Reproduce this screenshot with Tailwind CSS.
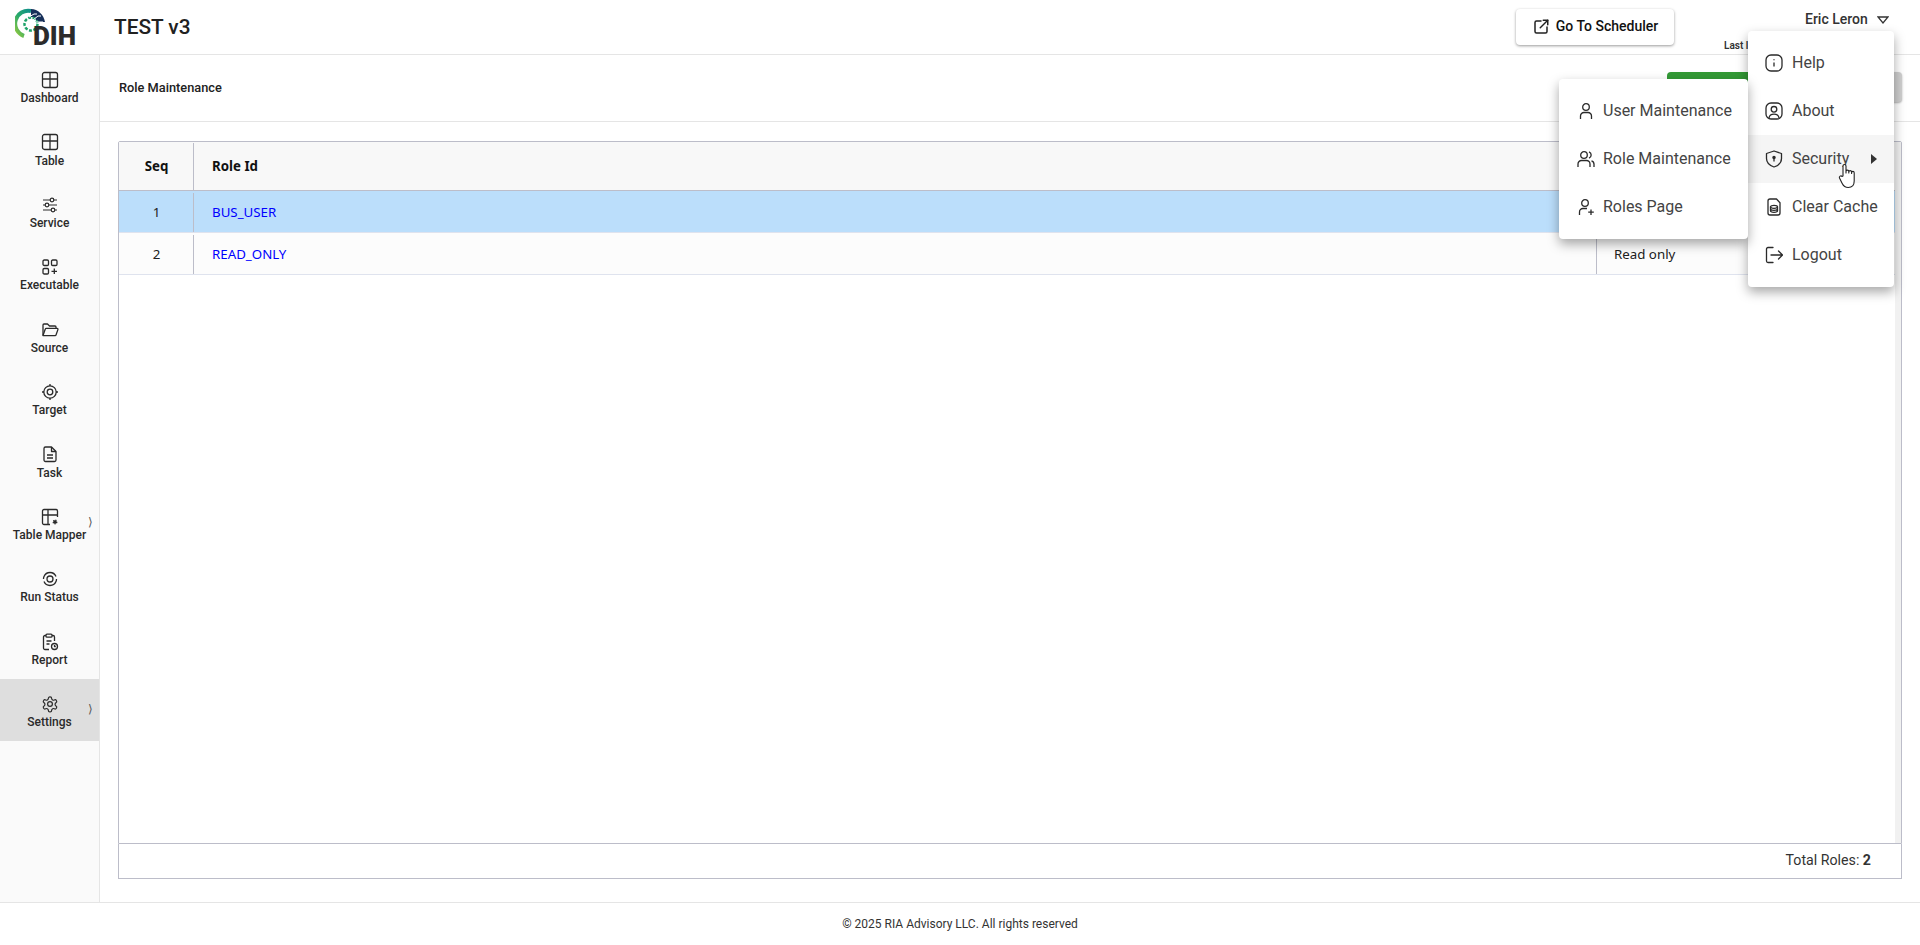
<!doctype html>
<html lang="en">
  <head>
    <meta charset="UTF-8" />
    <title>Role Maintenance</title>
    <script src="https://cdn.jsdelivr.net/npm/@tailwindcss/browser@4"></script>
  </head>
  <body class="h-[945px] overflow-hidden bg-white font-['Roboto',sans-serif] text-[#212121]">
    <div class="relative flex h-full flex-col">
      <!-- top bar -->
      <header class="flex h-[55px] shrink-0 items-center border-b border-[#e5e5e5] pl-[15px]">
        <svg class="h-[46px] w-[66px] shrink-0" viewBox="0 0 66 46" fill="none">
          <defs>
            <linearGradient id="ring" x1="0" y1="1" x2="1" y2="0">
              <stop offset="0" stop-color="#9ccb3b" />
              <stop offset="0.5" stop-color="#27a96c" />
              <stop offset="1" stop-color="#0f8f8a" />
            </linearGradient>
          </defs>
          <g transform="translate(1 3)">
            <path d="M8 29A13 13 0 0 1 15 4" stroke="url(#ring)" stroke-width="4" />
            <path d="M15 2c7 0 13 6 14 13h-8c-1-3-3-5-6-5z" fill="#17305a" />
            <circle cx="15" cy="17" r="6.500" stroke="#1fa36a" stroke-width="2.500" stroke-dasharray="3 1.500" />
            <path d="M13 10l5-3h3M17 13l5-4h3M20 15h7" stroke="#fff" stroke-width="1" />
            <circle cx="15" cy="17" r="4" fill="#fff" />
          </g>
          <text x="18" y="41" font-family="Roboto, sans-serif" font-weight="900" font-size="25" textLength="43" lengthAdjust="spacingAndGlyphs" fill="#2b2b2b">DIH</text>
        </svg>
        <div class="ml-[33px] mt-[1px] text-[20.8px] font-medium text-[#212121]">TEST v3</div>
        <button class="ml-auto flex h-[36px] w-[158px] items-center justify-center gap-[6px] rounded-[4px] bg-white pb-[1px] text-[14px] font-medium text-[#111] shadow-[0_1px_3px_rgba(0,0,0,0.4)]">
          <svg class="size-[18px]" viewBox="0 0 24 24" fill="none" stroke="#222" stroke-width="2" stroke-linecap="round" stroke-linejoin="round"><path d="M12 4H6a2 2 0 0 0-2 2v12a2 2 0 0 0 2 2h12a2 2 0 0 0 2-2v-6" /><path d="M11 13 21 3" /><path d="M15 3h6v6" /></svg>
          Go To Scheduler
        </button>
        <div class="ml-[50px] flex h-full w-[196px] flex-col">
          <div class="mt-[9px] flex items-center pl-[81px] text-[14px] font-medium text-[#333]">
            Eric Leron
            <svg class="ml-[9px] mt-[1px] h-[8px] w-[12px]" viewBox="0 0 12 8" fill="none" stroke="#333" stroke-width="1.300"><path d="M1 1h10L6 7z" /></svg>
          </div>
          <div class="mt-[8px] text-[10px] font-semibold text-[#333]">Last login</div>
        </div>
      </header>

      <div class="flex min-h-0 flex-1">
        <!-- sidebar -->
        <nav class="w-[100px] shrink-0 border-r border-[#e5e5e5] bg-[#fafafa] text-[12px] font-medium text-[#2a2a2a]">
          <div class="relative flex h-[62.4px] flex-col items-center pt-[16px]">
            <svg class="size-[18px]" viewBox="0 0 18 18" fill="none" stroke="#2a2a2a" stroke-width="1.300"><rect x="1.500" y="1.500" width="15" height="15" rx="2" /><path d="M1.500 8h15M9 1.500v15" /></svg>
            <span class="mt-[1.2px] leading-[16px]">Dashboard</span>
          </div>
          <div class="relative flex h-[62.4px] flex-col items-center pt-[16px]">
            <svg class="size-[18px]" viewBox="0 0 18 18" fill="none" stroke="#2a2a2a" stroke-width="1.300"><rect x="1.500" y="1.500" width="15" height="15" rx="2" /><path d="M1.500 8h15M9 1.500v15" /></svg>
            <span class="mt-[1.2px] leading-[16px]">Table</span>
          </div>
          <div class="relative flex h-[62.4px] flex-col items-center pt-[16px]">
            <svg class="size-[18px]" viewBox="0 0 18 18" fill="none" stroke="#2a2a2a" stroke-width="1.200"><path d="M2 4h7M13 4h3M2 9h2M8 9h8M2 14h8M14 14h2" /><circle cx="11" cy="4" r="1.800" /><circle cx="6" cy="9" r="1.800" /><circle cx="12" cy="14" r="1.800" /></svg>
            <span class="mt-[1.2px] leading-[16px]">Service</span>
          </div>
          <div class="relative flex h-[62.4px] flex-col items-center pt-[16px]">
            <svg class="size-[18px]" viewBox="0 0 18 18" fill="none" stroke="#2a2a2a" stroke-width="1.300"><rect x="2" y="2" width="5.500" height="5.500" rx="1.200" /><rect x="10.500" y="2" width="5.500" height="5.500" rx="1.200" /><rect x="2" y="10.500" width="5.500" height="5.500" rx="1.200" /><path d="M13.300 10.500v5.500M10.500 13.300H16" /></svg>
            <span class="mt-[1.2px] leading-[16px]">Executable</span>
          </div>
          <div class="relative flex h-[62.4px] flex-col items-center pt-[16px]">
            <svg class="size-[18px]" viewBox="0 0 18 18" fill="none" stroke="#2a2a2a" stroke-width="1.300" stroke-linejoin="round"><path d="M2 14.500V4a1 1 0 0 1 1-1h3.500l2 2H14a1 1 0 0 1 1 1v1.500" /><path d="M2 14.500 4.300 8a1 1 0 0 1 1-.7H16a1 1 0 0 1 .9 1.300L15 14a1 1 0 0 1-1 .7H3z" /></svg>
            <span class="mt-[1.2px] leading-[16px]">Source</span>
          </div>
          <div class="relative flex h-[62.4px] flex-col items-center pt-[16px]">
            <svg class="size-[18px]" viewBox="0 0 18 18" fill="none" stroke="#2a2a2a" stroke-width="1.300"><circle cx="9" cy="9" r="6.200" /><circle cx="9" cy="9" r="2.800" /><path d="M9 1v2M9 15v2M1 9h2M15 9h2" /></svg>
            <span class="mt-[1.2px] leading-[16px]">Target</span>
          </div>
          <div class="relative flex h-[62.4px] flex-col items-center pt-[16px]">
            <svg class="size-[18px]" viewBox="0 0 18 18" fill="none" stroke="#2a2a2a" stroke-width="1.300" stroke-linejoin="round"><path d="M4.500 2h6L15 6.500V15a1.500 1.500 0 0 1-1.500 1.500h-9A1.500 1.500 0 0 1 3 15V3.500A1.500 1.500 0 0 1 4.500 2z" /><path d="M10.500 2v4.500H15M6 10h6M6 13h6" /></svg>
            <span class="mt-[1.2px] leading-[16px]">Task</span>
          </div>
          <div class="relative flex h-[62.4px] flex-col items-center pt-[16px]">
            <svg class="size-[18px]" viewBox="0 0 18 18" fill="none" stroke="#2a2a2a" stroke-width="1.300"><path d="M9 16.500H3A1.500 1.500 0 0 1 1.500 15V3A1.500 1.500 0 0 1 3 1.500h12A1.500 1.500 0 0 1 16.500 3v6M1.500 7h15M7 1.500v15" /><circle cx="14" cy="14" r="1.800" fill="#2a2a2a" stroke-dasharray="1 1" /></svg>
            <span class="mt-[1.2px] leading-[16px]">Table Mapper</span>
            <span class="absolute right-[6px] top-[21px] text-[12px] text-[#555]">⟩</span>
          </div>
          <div class="relative flex h-[62.4px] flex-col items-center pt-[16px]">
            <svg class="size-[18px]" viewBox="0 0 18 18" fill="none" stroke="#2a2a2a" stroke-width="1.300"><circle cx="9" cy="9" r="3" /><path d="M3 6.500A6.500 6.500 0 0 1 15 6.500M15 11.500A6.500 6.500 0 0 1 3 11.500M2.500 9a6.500 6.500 0 0 1 .5-2.500M15.500 9a6.500 6.500 0 0 1-.5 2.500" /></svg>
            <span class="mt-[1.2px] leading-[16px]">Run Status</span>
          </div>
          <div class="relative flex h-[62.4px] flex-col items-center pt-[16px]">
            <svg class="size-[18px]" viewBox="0 0 18 18" fill="none" stroke="#2a2a2a" stroke-width="1.300" stroke-linejoin="round"><path d="M8 16.500H4A1.500 1.500 0 0 1 2.500 15V4A1.500 1.500 0 0 1 4 2.500h1M11 2.500h1A1.500 1.500 0 0 1 13.500 4v4" /><rect x="5" y="1.200" width="6" height="3" rx="1" /><path d="M5.500 8h5M5.500 11h3" /><circle cx="13.500" cy="13.500" r="3" /><path d="M13.500 12v1.500h1.300" /></svg>
            <span class="mt-[1.2px] leading-[16px]">Report</span>
          </div>
          <div class="relative flex h-[62.4px] flex-col items-center bg-[#dedede] pt-[16px]">
            <svg class="size-[18px]" viewBox="0 0 24 24" fill="none" stroke="#2a2a2a" stroke-width="1.600" stroke-linejoin="round"><circle cx="12" cy="12" r="3.200" /><path d="M12.200 2.500h-.4a2 2 0 0 0-2 2v.2a2 2 0 0 1-1 1.700l-.4.300a2 2 0 0 1-2 0l-.2-.1a2 2 0 0 0-2.700.7l-.2.400a2 2 0 0 0 .7 2.700l.2.100a2 2 0 0 1 1 1.700v.6a2 2 0 0 1-1 1.700l-.2.100a2 2 0 0 0-.7 2.700l.2.400a2 2 0 0 0 2.700.7l.2-.1a2 2 0 0 1 2 0l.4.300a2 2 0 0 1 1 1.700v.2a2 2 0 0 0 2 2h.4a2 2 0 0 0 2-2v-.2a2 2 0 0 1 1-1.700l.4-.3a2 2 0 0 1 2 0l.2.100a2 2 0 0 0 2.700-.7l.2-.4a2 2 0 0 0-.7-2.700l-.2-.1a2 2 0 0 1-1-1.700v-.6a2 2 0 0 1 1-1.700l.2-.1a2 2 0 0 0 .7-2.700l-.2-.4a2 2 0 0 0-2.700-.7l-.2.100a2 2 0 0 1-2 0l-.4-.3a2 2 0 0 1-1-1.700v-.2a2 2 0 0 0-2-2z" /></svg>
            <span class="mt-[1.2px] leading-[16px]">Settings</span>
            <span class="absolute right-[6px] top-[21px] text-[12px] text-[#555]">⟩</span>
          </div>
        </nav>

        <main class="flex min-w-0 flex-1 flex-col">
          <div class="flex h-[67px] shrink-0 items-center justify-between border-b border-[#e5e5e5] pl-[19px] pr-[18px]">
            <span class="text-[12.8px] font-medium">Role Maintenance</span>
            <div class="-mt-[3px] flex h-[30px] gap-[8px]">
              <div class="h-[30px] w-[121px] rounded-[4px] bg-[#339a36]"></div>
              <div class="h-[30px] w-[106px] rounded-[4px] bg-[#cfcfcf] shadow-[0_1px_2px_rgba(0,0,0,0.3)]"></div>
            </div>
          </div>

          <div class="px-[18px] pt-[19px] font-['Noto_Sans',sans-serif] text-[13.3px]">
            <div class="relative h-[703px] rounded-t-[2px] border border-[#bcbdc9] pr-[6px]">
              <div class="flex h-[49px] border-b border-[#bcbdc9] bg-[#f8f8f8] pt-[1px] font-bold text-[#111]">
                <div class="flex w-[75px] items-center justify-center border-r border-[#bcbdc9] pl-[1px]">Seq</div>
                <div class="flex flex-1 items-center pl-[18px]">Role Id</div>
              </div>
              <div class="flex h-[42px] border-b border-[#dfe3ee] bg-[#bbdefb] pt-[2px]">
                <div class="flex w-[75px] items-center justify-center border-r border-[#bcbdc9] pl-[1px]">1</div>
                <div class="flex flex-1 items-center pl-[18px] text-[#0000ff]">BUS_USER</div>
              </div>
              <div class="flex h-[42px] border-b border-[#dfe3ee] bg-[#fcfcfc] pt-[2px]">
                <div class="flex w-[75px] items-center justify-center border-r border-[#bcbdc9] pl-[1px]">2</div>
                <div class="flex w-[1403px] items-center border-r border-[#bcbdc9] pl-[18px] text-[#0000ff]">READ_ONLY</div>
                <div class="flex flex-1 items-center pl-[17px]">Read only</div>
              </div>
              <div class="absolute inset-y-0 right-0 w-[6px] bg-[#f1f1f1]"></div>
            </div>
            <div class="flex h-[35px] items-center justify-end border border-t-0 border-[#bcbdc9] pr-[30px] font-['Roboto',sans-serif] text-[14.2px] text-[#333]">
              Total Roles:&nbsp;<b class="font-bold">2</b>
            </div>
          </div>
        </main>
      </div>

      <footer class="flex h-[43px] shrink-0 items-center justify-center border-t border-[#e5e5e5] text-[12px] text-[#333]">
        © 2025 RIA Advisory LLC. All rights reserved
      </footer>

      <!-- settings menu -->
      <div class="absolute left-[1748px] top-[31px] w-[146px] rounded-[4px] bg-white py-[8px] text-[16px] text-[#444] shadow-[0_5px_12px_rgba(0,0,0,0.35)]">
        <div class="flex h-[48px] items-center gap-[9px] pl-[17px]">
          <svg class="size-[18px]" viewBox="0 0 18 18" fill="none" stroke="#2a2a2a" stroke-width="1.300"><rect x="1" y="1" width="16" height="16" rx="5" /><path d="M9 8.500v4M9 5.200v1" /></svg>
          Help
        </div>
        <div class="flex h-[48px] items-center gap-[9px] pl-[17px]">
          <svg class="size-[18px]" viewBox="0 0 18 18" fill="none" stroke="#2a2a2a" stroke-width="1.300"><rect x="1" y="1" width="16" height="16" rx="5" /><circle cx="9" cy="7.300" r="2.800" /><path d="M4 16c.5-3 2.500-3.800 5-3.800s4.500.8 5 3.800" /></svg>
          About
        </div>
        <div class="relative flex h-[48px] items-center gap-[9px] bg-[#f5f5f5] pl-[17px]">
          <svg class="size-[18px]" viewBox="0 0 18 18" fill="none" stroke="#2a2a2a" stroke-width="1.300" stroke-linejoin="round"><path d="M9 1 16.500 3.500v5c0 4-3.200 7-7.500 8.500C4.700 15.500 1.500 12.500 1.500 8.500v-5z" /><circle cx="9" cy="7.500" r="1.100" fill="#2a2a2a" /><path d="M9 8.500v3" /></svg>
          Security
          <svg class="absolute left-[123px] top-[19px] h-[10px] w-[6px]" viewBox="0 0 6 10" fill="#333"><path d="M0 0l6 5-6 5z" /></svg>
        </div>
        <div class="flex h-[48px] items-center gap-[9px] pl-[17px]">
          <svg class="size-[18px]" viewBox="0 0 18 18" fill="none" stroke="#2a2a2a" stroke-width="1.300" stroke-linejoin="round"><path d="M5 1h6.500L15 4.800V15a2 2 0 0 1-2 2H5a2 2 0 0 1-2-2V3a2 2 0 0 1 2-2z" /><ellipse cx="9" cy="8.800" rx="3.500" ry="1.500" /><path d="M5.500 8.800v4c0 .8 1.600 1.500 3.500 1.500s3.500-.7 3.500-1.500v-4M5.500 10.800c0 .8 1.600 1.500 3.500 1.500s3.500-.7 3.500-1.500" /></svg>
          Clear Cache
        </div>
        <div class="flex h-[48px] items-center gap-[9px] pl-[17px]">
          <svg class="size-[18px]" viewBox="0 0 18 18" fill="none" stroke="#2a2a2a" stroke-width="1.300" stroke-linecap="round" stroke-linejoin="round"><path d="M8 1.500H3A1.500 1.500 0 0 0 1.500 3v12A1.500 1.500 0 0 0 3 16.500H8" /><path d="M6 9h11.500M13.500 5 17.500 9l-4 4" /></svg>
          Logout
        </div>
      </div>

      <!-- security submenu -->
      <div class="absolute left-[1559px] top-[79px] w-[189px] rounded-[4px] bg-white py-[8px] text-[16px] text-[#444] shadow-[0_5px_12px_rgba(0,0,0,0.35)]">
        <div class="flex h-[48px] items-center gap-[8px] pl-[18px]">
          <svg class="size-[18px]" viewBox="0 0 18 18" fill="none" stroke="#2a2a2a" stroke-width="1.300"><circle cx="9" cy="5" r="3.300" /><path d="M3.500 17v-3a3.500 3.500 0 0 1 3.500-3.500h4a3.500 3.500 0 0 1 3.500 3.500v3" /></svg>
          User Maintenance
        </div>
        <div class="flex h-[48px] items-center gap-[8px] pl-[18px]">
          <svg class="size-[18px]" viewBox="0 0 18 18" fill="none" stroke="#2a2a2a" stroke-width="1.300"><circle cx="7" cy="5" r="3.300" /><path d="M1 17v-3a3.500 3.500 0 0 1 3.500-3.500h5a3.500 3.500 0 0 1 3.500 3.500v3M12 1.900a3.300 3.300 0 0 1 0 6.200M14.500 10.800a3.500 3.500 0 0 1 2.500 3.200v3" /></svg>
          Role Maintenance
        </div>
        <div class="flex h-[48px] items-center gap-[8px] pl-[18px]">
          <svg class="size-[18px]" viewBox="0 0 18 18" fill="none" stroke="#2a2a2a" stroke-width="1.300"><circle cx="8" cy="5" r="3.300" /><path d="M2.500 17v-3a3.500 3.500 0 0 1 3.500-3.500h4M14 11.500v5.500M11.200 14.200h5.600" /></svg>
          Roles Page
        </div>
      </div>

      <!-- mouse pointer -->
      <svg class="absolute left-[1838px] top-[163px] h-[26px] w-[20px]" viewBox="0 0 20 26" fill="#fff" stroke="#222" stroke-width="1.100" stroke-linejoin="round"><path d="M5 13V3a1.500 1.500 0 0 1 3 0v7V8.500a1.400 1.400 0 0 1 2.800 0V10 9a1.400 1.400 0 0 1 2.800 0v1.500-.8a1.300 1.300 0 0 1 2.600 0V18c0 4-2 6.500-6 6.500-3 0-4.500-1-6-4L1.500 15c-.8-1.500 1.500-3 2.500-1.500z" /></svg>
    </div>
  </body>
</html>
